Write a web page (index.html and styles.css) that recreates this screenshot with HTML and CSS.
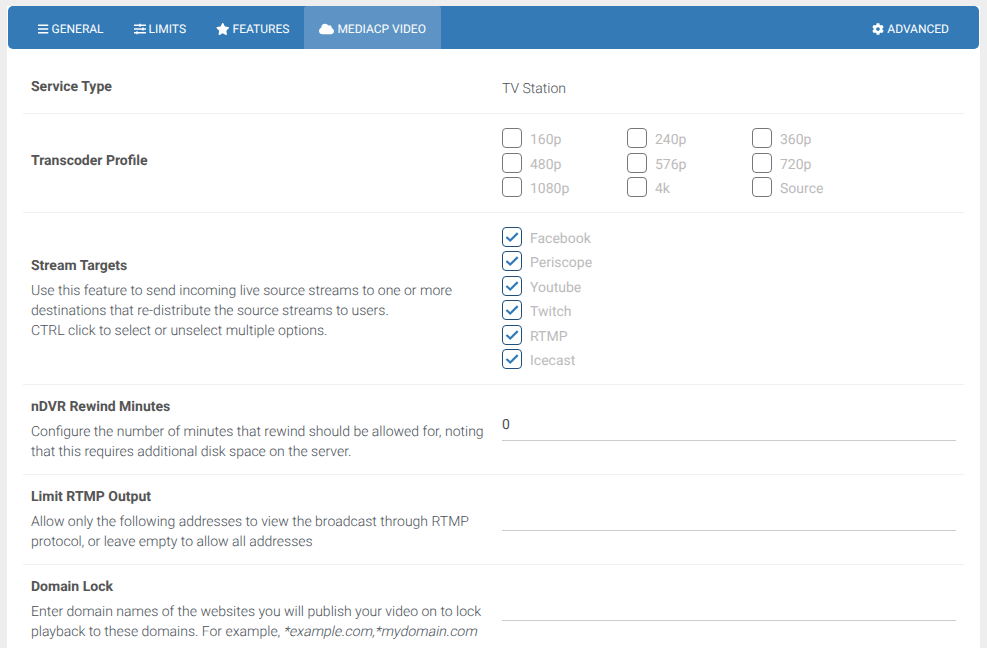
FILE: index.html
```html
<!DOCTYPE html>
<html lang="en">
<head>
<meta charset="utf-8">
<title>Service settings</title>
<link rel="stylesheet" href="styles.css">
</head>
<body>
<svg class="defs" width="0" height="0" aria-hidden="true">
  <symbol id="i-bars" viewBox="0 0 448 512"><path d="M16 132h416c8.837 0 16-7.163 16-16V76c0-8.837-7.163-16-16-16H16C7.163 60 0 67.163 0 76v40c0 8.837 7.163 16 16 16zm0 160h416c8.837 0 16-7.163 16-16v-40c0-8.837-7.163-16-16-16H16c-8.837 0-16 7.163-16 16v40c0 8.837 7.163 16 16 16zm0 160h416c8.837 0 16-7.163 16-16v-40c0-8.837-7.163-16-16-16H16c-8.837 0-16 7.163-16 16v40c0 8.837 7.163 16 16 16z"/></symbol>
  <symbol id="i-sliders" viewBox="0 0 512 512"><path d="M496 384H160v-16c0-8.800-7.200-16-16-16h-32c-8.800 0-16 7.200-16 16v16H16c-8.800 0-16 7.200-16 16v32c0 8.800 7.200 16 16 16h80v16c0 8.800 7.200 16 16 16h32c8.800 0 16-7.200 16-16v-16h336c8.800 0 16-7.200 16-16v-32c0-8.800-7.200-16-16-16zm0-160h-80v-16c0-8.800-7.200-16-16-16h-32c-8.800 0-16 7.200-16 16v16H16c-8.800 0-16 7.200-16 16v32c0 8.800 7.200 16 16 16h336v16c0 8.800 7.200 16 16 16h32c8.800 0 16-7.200 16-16v-16h80c8.800 0 16-7.200 16-16v-32c0-8.800-7.200-16-16-16zm0-160H288V48c0-8.800-7.200-16-16-16h-32c-8.800 0-16 7.200-16 16v16H16C7.200 64 0 71.200 0 80v32c0 8.800 7.200 16 16 16h208v16c0 8.800 7.200 16 16 16h32c8.800 0 16-7.200 16-16v-16h208c8.800 0 16-7.200 16-16V80c0-8.800-7.200-16-16-16z"/></symbol>
  <symbol id="i-star" viewBox="0 0 576 512"><path d="M259.300 17.800L194 150.200 47.900 171.500c-26.200 3.800-36.700 36.100-17.700 54.600l105.700 103-25 145.500c-4.500 26.300 23.200 46 46.400 33.700L288 439.600l130.700 68.700c23.200 12.200 50.900-7.400 46.400-33.700l-25-145.500 105.700-103c19-18.500 8.500-50.800-17.700-54.600L382 150.200 316.700 17.800c-11.700-23.600-45.600-23.900-57.400 0z"/></symbol>
  <symbol id="i-cloud" viewBox="0 0 640 512"><path d="M537.600 226.600c4.100-10.700 6.400-22.400 6.400-34.600 0-53-43-96-96-96-19.700 0-38.100 6-53.300 16.200C367 64.200 315.300 32 256 32c-88.400 0-160 71.600-160 160 0 2.700.1 5.400.2 8.100C40.200 219.800 0 273.200 0 336c0 79.500 64.500 144 144 144h368c70.700 0 128-57.300 128-128 0-61.900-44-113.600-102.400-125.400z"/></symbol>
  <symbol id="i-cog" viewBox="0 0 512 512"><path d="M487.400 315.700l-42.600-24.600c4.300-23.200 4.300-47 0-70.200l42.600-24.600c4.900-2.800 7.100-8.600 5.500-14-11.100-35.600-30-67.800-54.700-94.600-3.800-4.100-10-5.100-14.800-2.300L380.800 110c-17.900-15.400-38.500-27.300-60.800-35.100V25.800c0-5.600-3.900-10.500-9.400-11.700-36.700-8.200-74.300-7.800-109.200 0-5.500 1.200-9.400 6.100-9.400 11.700V75c-22.200 7.900-42.800 19.800-60.800 35.100L88.700 85.500c-4.900-2.800-11-1.900-14.800 2.300-24.700 26.700-43.600 58.900-54.700 94.600-1.700 5.400.6 11.200 5.500 14L67.300 221c-4.300 23.200-4.300 47 0 70.200l-42.600 24.600c-4.900 2.800-7.100 8.600-5.500 14 11.100 35.600 30 67.800 54.700 94.600 3.800 4.100 10 5.100 14.800 2.300l42.600-24.600c17.900 15.400 38.500 27.300 60.800 35.100v49.200c0 5.600 3.900 10.500 9.400 11.700 36.700 8.200 74.300 7.800 109.200 0 5.500-1.200 9.400-6.100 9.400-11.700v-49.200c22.200-7.900 42.800-19.800 60.800-35.100l42.600 24.600c4.900 2.800 11 1.900 14.800-2.300 24.700-26.700 43.600-58.900 54.700-94.600 1.500-5.500-.7-11.300-5.600-14.100zM256 336c-44.100 0-80-35.900-80-80s35.900-80 80-80 80 35.900 80 80-35.900 80-80 80z"/></symbol>
  <symbol id="i-check" viewBox="0 0 18 18"><path d="M3.400 9l3.800 3.500 7.500-7.400" fill="none" stroke="#337ab7" stroke-width="2.200"/></symbol>
</svg>
<main class="card">
  <nav class="tabs">
    <a class="tab"><svg class="icon bars"><use href="#i-bars"/></svg>General</a>
    <a class="tab"><svg class="icon sliders"><use href="#i-sliders"/></svg>Limits</a>
    <a class="tab"><svg class="icon star"><use href="#i-star"/></svg>Features</a>
    <a class="tab active"><svg class="icon cloud"><use href="#i-cloud"/></svg>MediaCP Video</a>
    <a class="tab push"><svg class="icon cog"><use href="#i-cog"/></svg>Advanced</a>
  </nav>
  <div class="form">
    <section class="row row-service">
      <div class="info"><h3>Service Type</h3></div>
      <div class="control"><p class="static">TV Station</p></div>
    </section>
    <section class="row row-profile">
      <div class="info"><h3>Transcoder Profile</h3></div>
      <div class="control options three">
        <label class="opt"><span class="box"></span>160p</label>
        <label class="opt"><span class="box"></span>240p</label>
        <label class="opt"><span class="box"></span>360p</label>
        <label class="opt"><span class="box"></span>480p</label>
        <label class="opt"><span class="box"></span>576p</label>
        <label class="opt"><span class="box"></span>720p</label>
        <label class="opt"><span class="box"></span>1080p</label>
        <label class="opt"><span class="box"></span>4k</label>
        <label class="opt"><span class="box"></span>Source</label>
      </div>
    </section>
    <section class="row row-targets">
      <div class="info">
        <h3>Stream Targets</h3>
        <p>Use this feature to send incoming live source streams to one or more destinations that re-distribute the source streams to users.<br>CTRL click to select or unselect multiple options.</p>
      </div>
      <div class="control options">
        <label class="opt"><span class="box on"><svg><use href="#i-check"/></svg></span>Facebook</label>
        <label class="opt"><span class="box on"><svg><use href="#i-check"/></svg></span>Periscope</label>
        <label class="opt"><span class="box on"><svg><use href="#i-check"/></svg></span>Youtube</label>
        <label class="opt"><span class="box on"><svg><use href="#i-check"/></svg></span>Twitch</label>
        <label class="opt"><span class="box on"><svg><use href="#i-check"/></svg></span>RTMP</label>
        <label class="opt"><span class="box on"><svg><use href="#i-check"/></svg></span>Icecast</label>
      </div>
    </section>
    <section class="row row-field">
      <div class="info">
        <h3>nDVR Rewind Minutes</h3>
        <p>Configure the number of minutes that rewind should be allowed for, noting that this requires additional disk space on the server.</p>
      </div>
      <div class="control"><div class="input">0</div></div>
    </section>
    <section class="row row-field">
      <div class="info">
        <h3>Limit RTMP Output</h3>
        <p>Allow only the following addresses to view the broadcast through RTMP protocol, or leave empty to allow all addresses</p>
      </div>
      <div class="control"><div class="input"></div></div>
    </section>
    <section class="row row-field">
      <div class="info">
        <h3>Domain Lock</h3>
        <p>Enter domain names of the websites you will publish your video on to lock playback to these domains. For example, <em class="sample">*example.com,*mydomain.com</em></p>
      </div>
      <div class="control"><div class="input"></div></div>
    </section>
  </div>
</main>
</body>
</html>
```

FILE: styles.css
```css
* { box-sizing: border-box; }
html, body { height: 648px; overflow: hidden; }
body {
  margin: 0;
  padding: 6px 7px 0;
  background: #eeeeee;
  font-family: Roboto, "Liberation Sans", sans-serif;
  font-size: 14px;
  color: #555;
  text-rendering: geometricPrecision;
}
.defs { position: absolute; }
.card { background: #fff; width: 973px; height: 642px; overflow: hidden; }
.tabs {
  display: flex;
  height: 43px;
  margin-left: 1px;
  width: 971px;
  padding: 0 15px;
  background: #337ab7;
  border-radius: 5px;
}
.tab {
  display: flex;
  align-items: center;
  padding: 3px 15px 0;
  color: #fff;
  font-size: 12px;
  text-transform: uppercase;
  border-radius: 3px 3px 0 0;
}
.tab.active { background: #5e94c5; }
.tab.push { margin-left: auto; }
.icon { height: 12px; fill: #fff; margin-right: 3px; flex: none; }
.bars { width: 10.5px; }
.sliders { width: 12px; }
.star { width: 13.5px; }
.cloud { width: 15px; }
.cog { width: 12px; }
.form { margin: 0 16px; }
.row {
  display: flex;
  border-bottom: 1px solid #f0f0f0;
  padding-left: 8px;
}
.row-service { height: 65px; }
.row-profile { height: 99px; }
.row-targets { height: 172px; }
.row-field { height: 90px; }
.info { width: 471px; padding-right: 15px; flex: none; }
.row-service .info { padding-top: 28px; }
.row-profile .info { padding-top: 37px; }
.row-targets .info { padding-top: 43px; }
.row-field .info { padding-top: 12px; }
h3 { margin: 0; font-size: 14px; line-height: 20px; font-weight: 700; color: #555; }
.info p { margin: 5px 0 0; line-height: 20px; font-weight: 300; color: #495057; }
.sample { display: inline-block; font-style: normal; transform: skewX(-12deg); }
.control { width: 454px; }
.static { margin: 0; padding-top: 30px; line-height: 20px; font-weight: 300; color: #495057; }
.options { padding-top: 12.25px; }
.row-targets .options { padding-top: 11.75px; }
.three { display: grid; grid-template-columns: repeat(3, 125px); grid-auto-rows: 24.5px; }
.opt { display: flex; align-items: flex-start; height: 24.5px; line-height: 28px; color: #bbb; font-weight: 400; }
.box {
  width: 20px;
  height: 20px;
  margin: 2px 8px 0 0;
  border: 1px solid #777;
  border-radius: 4px;
  flex: none;
}
.box.on { border-color: #1f4e79; }
.box svg { display: block; width: 18px; height: 18px; }
.input {
  height: 32px;
  margin-top: 24px;
  border-bottom: 1px solid #ccc;
  line-height: 32px;
  color: #495057;
  font-weight: 400;
}
```
